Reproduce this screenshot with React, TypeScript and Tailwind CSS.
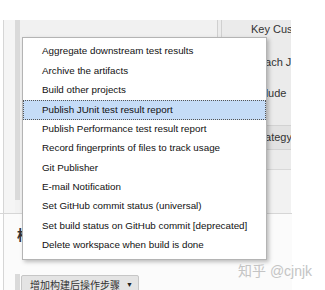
import { FC } from "react";

const items = [
  "Aggregate downstream test results",
  "Archive the artifacts",
  "Build other projects",
  "Publish JUnit test result report",
  "Publish Performance test result report",
  "Record fingerprints of files to track usage",
  "Git Publisher",
  "E-mail Notification",
  "Set GitHub commit status (universal)",
  "Set build status on GitHub commit [deprecated]",
  "Delete workspace when build is done",
];

const sans = "font-['Liberation_Sans','Arial',sans-serif]";
const cjk = "font-['Liberation_Sans','Noto_Sans_CJK_SC',sans-serif]";

const MenuItem: FC<{ label: string; active?: boolean }> = ({ label, active }) => (
  <div
    className={`flex h-[19.4px] items-center border pl-[18px] text-[9.8px] text-[#111] ${
      active ? "border-dotted border-[#555] bg-[#c5dcf7]" : "border-transparent"
    }`}
  >
    {label}
  </div>
);

const RightColumn: FC = () => (
  <div className="flex w-[69px] flex-col overflow-hidden whitespace-nowrap bg-[#ebebeb] text-[11px] text-[#333]">
    <div className="flex h-[18px] items-center pl-[29px]">Key Custom</div>
    <div className="h-[9px]" />
    <div className="flex h-[30px] items-center pl-[29px]">Reach Job</div>
    <div className="flex h-[32px] items-center pl-[29px]">Include</div>
    <div className="h-[16px]" />
    <div className="flex h-[25px] items-center border-y border-[#d2d2d2] bg-[#e2e2e2] pl-[29px]">
      Strategy
    </div>
    <div className="h-[20px] border-b border-[#d8d8d8]" />
    <div className="flex-1 bg-[#f2f2f2]" />
  </div>
);

export default function App() {
  return (
    <div className={`relative h-[290px] w-[325px] overflow-hidden bg-white ${sans}`}>
      <div className="h-[20px]" />
      <div className="w-[292px]">
        {/* upper panel */}
        <div className="flex h-[193px]">
          <div className="w-[3px] bg-white" />
          <div className="w-px bg-[#d6d6d6]" />
          <div className="w-[11px] bg-[#f5f5f5]" />
          <div className="flex w-[5px] flex-col">
            <div className="h-[180px] bg-[#dadada]" />
            <div className="flex-1 bg-[#f2f2f2]" />
          </div>
          <div className="w-[197px] bg-[#f1f1f1]" />
          <div className="w-px bg-[#d0d0d0]" />
          <div className="w-[3px] bg-[#ececec]" />
          <div className="w-px bg-[#d0d0d0]" />
          <RightColumn />
        </div>
        <div className="h-px bg-[#d6d6d6]" />
        {/* lower panel */}
        <div className="flex h-[76px]">
          <div className="w-[3px] bg-white" />
          <div className="w-px bg-[#d6d6d6]" />
          <div className="flex flex-1 flex-col bg-[#fbfbfb]">
            <div className={`pl-[13px] pt-[12px] text-[14px] font-bold leading-[18px] text-[#333] ${cjk}`}>
              构建后操作
            </div>
            <div className="mt-[30px] flex flex-1">
              <div className="ml-[11px] w-[5px] bg-[#dadada]" />
              <div className="pl-px pt-px">
                <button
                  className={`flex h-[21px] w-[118px] items-center gap-[6px] rounded-[2px] border border-[#c6c6c6] bg-[#e4e4e4] pl-[8px] text-[10px] text-[#333] ${cjk}`}
                >
                  增加构建后操作步骤
                  <span className="text-[7px] text-[#222]">▼</span>
                </button>
              </div>
            </div>
          </div>
        </div>
      </div>

      {/* dropdown menu */}
      <div className="absolute left-[22px] top-[37px] w-[245px] border border-[#b4b4b4] bg-white py-[4px] shadow-[2px_2px_4px_rgba(0,0,0,0.25)]">
        {items.map((label, i) => (
          <MenuItem key={label} label={label} active={i === 3} />
        ))}
      </div>

      {/* watermark */}
      <div
        className={`absolute left-[238px] top-[261px] whitespace-nowrap text-[14px] text-[#c4c4c4] ${cjk}`}
      >
        知乎 @cjnjk
      </div>
    </div>
  );
}
